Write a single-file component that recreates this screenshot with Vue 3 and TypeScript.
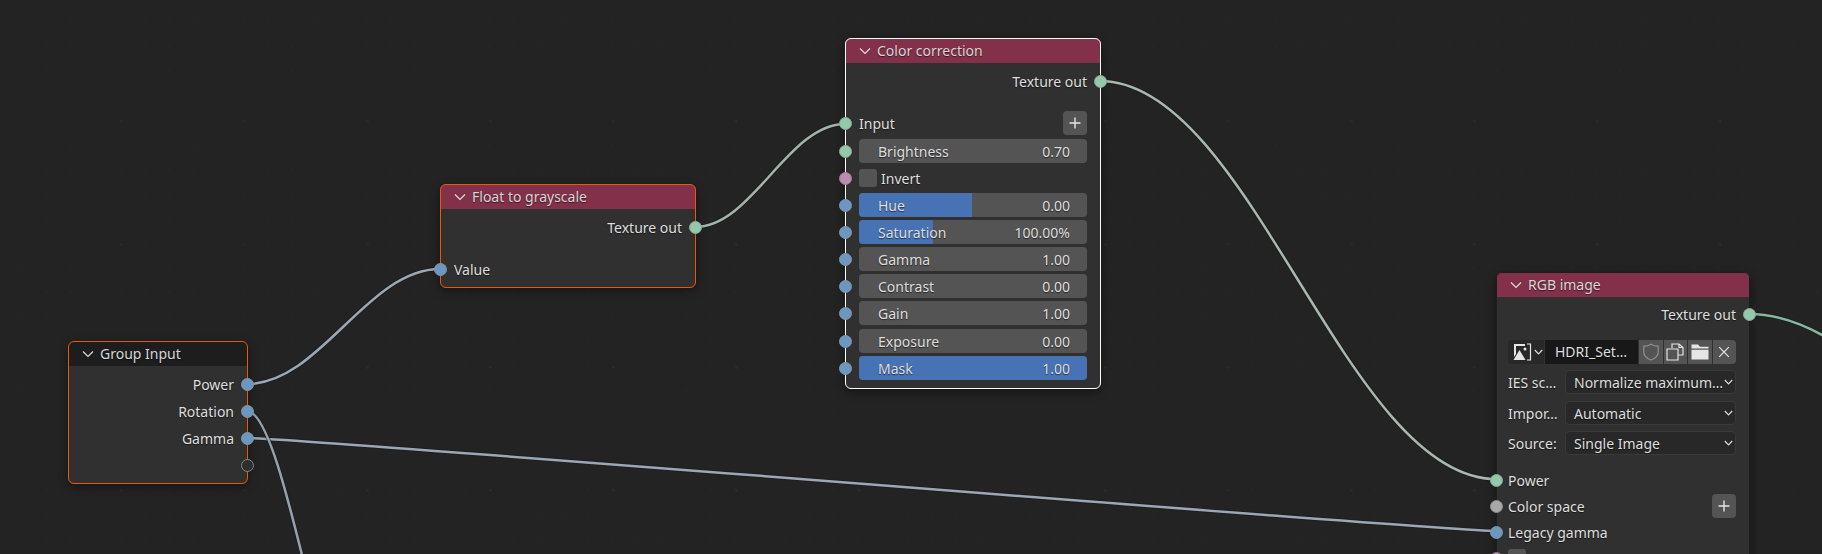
<template>
  <div class="canvas">
    <svg class="wires" width="1822" height="554">
      <g v-for="w in wires" :key="w.id" fill="none">
        <path :d="wirePath(w)" stroke="#1a1a1a" stroke-opacity="0.5" stroke-width="4.5" />
        <path :d="wirePath(w)" :stroke="w.color" stroke-width="2.5" />
      </g>
    </svg>

    <div
      v-for="node in nodes"
      :key="node.title"
      class="node"
      :class="node.state"
      :style="{ left: node.x + 'px', top: node.y + 'px', width: node.w + 'px' }"
    >
      <div class="head" :class="{ dark: node.dark }">
        <svg class="chevron" width="12" height="12" viewBox="0 0 12 12">
          <path d="M1 3.5 L6 8.5 L11 3.5" />
        </svg>
        <span>{{ node.title }}</span>
      </div>

      <div class="body" :style="{ paddingBottom: (node.pad ?? 7) + 'px' }">
        <div
          v-for="(row, i) in node.rows"
          :key="i"
          class="row"
          :class="{ right: row.kind === 'out' }"
          :style="{ marginTop: (row.gap ?? 3) + 'px' }"
        >
          <i
            v-if="row.socket"
            class="socket"
            :class="[row.socket, row.kind === 'out' ? 'on-right' : 'on-left']"
          ></i>

          <span v-if="row.kind === 'out' || row.kind === 'in'">{{ row.label }}</span>

          <button v-if="row.plus" class="plus">
            <svg width="12" height="12" viewBox="0 0 12 12"><path d="M6 0.5 V11.5 M0.5 6 H11.5" /></svg>
          </button>

          <div v-if="row.kind === 'slider'" class="slider">
            <div class="fill" :style="{ width: (row.fill ?? 0) + '%' }"></div>
            <span class="name">{{ row.label }}</span>
            <span class="value">{{ row.value }}</span>
          </div>

          <template v-if="row.kind === 'check'">
            <span class="box"></span>
            <span>{{ row.label }}</span>
          </template>

          <template v-if="row.kind === 'select'">
            <span class="select-label">{{ row.label }}</span>
            <div class="select">
              <span>{{ row.value }}</span>
              <svg class="mini" width="9" height="6" viewBox="0 0 9 6"><path d="M0.8 1 L4.5 4.8 L8.2 1" /></svg>
            </div>
          </template>

          <div v-if="row.kind === 'image'" class="picker">
            <div class="pick-type">
              <svg width="19" height="18" viewBox="0 0 19 18">
                <path class="fillw" d="M1 1 H12 V3 H3 V11 L1 14 Z" />
                <path class="fillw" d="M0.5 17 L6.5 7 L12.5 17 Z" />
                <circle class="fillw" cx="12" cy="6" r="1.5" />
                <path class="linew" d="M14 1 H17.5 V17 H14" />
              </svg>
              <svg class="mini" width="9" height="6" viewBox="0 0 9 6"><path d="M0.8 1 L4.5 4.8 L8.2 1" /></svg>
            </div>
            <div class="pick-name">HDRI_Set…</div>
            <div class="pick-btn">
              <svg width="18" height="18" viewBox="0 0 18 18">
                <path class="lineg" d="M9 1.2 C6.5 2.8 4.5 3.2 1.8 3.2 V9 C1.8 13 5 15.5 9 17 C13 15.5 16.2 13 16.2 9 V3.2 C13.5 3.2 11.5 2.8 9 1.2 Z" />
              </svg>
            </div>
            <div class="pick-btn">
              <svg width="18" height="18" viewBox="0 0 18 18">
                <path class="linew" d="M6 5 V1 H13 L17 4.5 V12 H12" />
                <path class="linew" d="M13 1 V4.5 H17" />
                <path class="linew" d="M1 6 H12 V17 H1 Z" />
              </svg>
            </div>
            <div class="pick-btn">
              <svg width="18" height="16" viewBox="0 0 18 16">
                <path class="fillw" d="M0.5 0.5 H7 L9 2.8 H17.5 V4.6 H0.5 Z" />
                <path class="fillw" d="M0.5 5.8 H17.5 V15.5 H0.5 Z" />
              </svg>
            </div>
            <div class="pick-btn">
              <svg width="12" height="12" viewBox="0 0 12 12"><path class="linew" d="M1.2 1.2 L10.8 10.8 M10.8 1.2 L1.2 10.8" /></svg>
            </div>
          </div>
        </div>
      </div>
    </div>
  </div>
</template>

<script setup lang="ts">
type Socket = 'green' | 'blue' | 'pink' | 'gray' | 'empty';

interface Row {
  kind: 'out' | 'in' | 'slider' | 'check' | 'select' | 'image';
  label?: string;
  value?: string;
  socket?: Socket;
  gap?: number;
  fill?: number;
  plus?: boolean;
}

interface GraphNode {
  title: string;
  x: number;
  y: number;
  w: number;
  state: 'active' | 'selected' | 'idle';
  dark?: boolean;
  pad?: number;
  rows: Row[];
}

interface Wire {
  id: string;
  x1: number;
  y1: number;
  x2: number;
  y2: number;
  h: number;
  color: string;
}

const slider = (label: string, value: string, fill = 0, gap = 3): Row => ({
  kind: 'slider',
  label,
  value,
  fill,
  gap,
  socket: 'blue',
});

const nodes: GraphNode[] = [
  {
    title: 'Group Input',
    x: 68,
    y: 341,
    w: 180,
    state: 'selected',
    dark: true,
    rows: [
      { kind: 'out', label: 'Power', socket: 'blue', gap: 6 },
      { kind: 'out', label: 'Rotation', socket: 'blue' },
      { kind: 'out', label: 'Gamma', socket: 'blue' },
      { kind: 'out', label: '', socket: 'empty' },
    ],
  },
  {
    title: 'Float to grayscale',
    x: 440,
    y: 184,
    w: 256,
    state: 'selected',
    rows: [
      { kind: 'out', label: 'Texture out', socket: 'green', gap: 6 },
      { kind: 'in', label: 'Value', socket: 'blue', gap: 18 },
    ],
  },
  {
    title: 'Color correction',
    x: 845,
    y: 38,
    w: 256,
    state: 'active',
    pad: 9,
    rows: [
      { kind: 'out', label: 'Texture out', socket: 'green', gap: 6 },
      { kind: 'in', label: 'Input', socket: 'green', gap: 18, plus: true },
      { ...slider('Brightness', '0.70'), socket: 'green', gap: 4 },
      { kind: 'check', label: 'Invert', socket: 'pink' },
      slider('Hue', '0.00', 49.5),
      slider('Saturation', '100.00%', 32.5),
      slider('Gamma', '1.00'),
      slider('Contrast', '0.00'),
      slider('Gain', '1.00'),
      slider('Exposure', '0.00', 0, 4),
      slider('Mask', '1.00', 100),
    ],
  },
  {
    title: 'RGB image',
    x: 1496,
    y: 272,
    w: 254,
    state: 'idle',
    rows: [
      { kind: 'out', label: 'Texture out', socket: 'green', gap: 5 },
      { kind: 'image', gap: 14 },
      { kind: 'select', label: 'IES sc…', value: 'Normalize maximum…', gap: 6 },
      { kind: 'select', label: 'Impor…', value: 'Automatic', gap: 7 },
      { kind: 'select', label: 'Source:', value: 'Single Image', gap: 6 },
      { kind: 'in', label: 'Power', socket: 'green', gap: 13 },
      { kind: 'in', label: 'Color space', socket: 'gray', gap: 2, plus: true },
      { kind: 'in', label: 'Legacy gamma', socket: 'blue', gap: 2 },
      { kind: 'check', label: 'Invert', socket: 'pink', gap: 2 },
    ],
  },
];

const wires: Wire[] = [
  { id: 'w1', x1: 247, y1: 384, x2: 440, y2: 269, h: 73, color: '#9aa8b5' },
  { id: 'w2', x1: 695, y1: 227, x2: 845, y2: 124, h: 57, color: '#a3b5aa' },
  { id: 'w3', x1: 1100, y1: 81, x2: 1496, y2: 479, h: 150, color: '#a8b8ae' },
  { id: 'w4', x1: 247, y1: 438, x2: 1496, y2: 531, h: 60, color: '#9aa8b5' },
  { id: 'w5', x1: 247, y1: 411, x2: 372, y2: 760, h: 40, color: '#94a2ae' },
  { id: 'w6', x1: 1749, y1: 314, x2: 2100, y2: 520, h: 130, color: '#84b8a0' },
];

function wirePath(w: Wire): string {
  return `M ${w.x1} ${w.y1} C ${w.x1 + w.h} ${w.y1}, ${w.x2 - w.h} ${w.y2}, ${w.x2} ${w.y2}`;
}
</script>

<style>
body {
  background: #232323;
}
</style>

<style scoped>
.canvas {
  position: relative;
  width: 1822px;
  height: 554px;
  overflow: hidden;
  background-color: #232323;
  background-image:
    radial-gradient(circle, #2a2a2a 1px, transparent 1.6px),
    radial-gradient(circle, #262626 0.8px, transparent 1.3px);
  background-size: 123px 123px, 24.6px 24.6px;
  background-position: 60px 60px, 9.7px 9.7px;
  font-family: "Noto Sans", sans-serif;
  font-size: 14px;
  color: #dedede;
  text-shadow: 0 1px 1px rgba(0, 0, 0, 0.55);
}

.wires {
  position: absolute;
  left: 0;
  top: 0;
}

.node {
  position: absolute;
  box-sizing: border-box;
  background: #303030;
  border-radius: 6px;
  box-shadow: 0 3px 10px rgba(0, 0, 0, 0.4);
  outline: 1px solid transparent;
  outline-offset: -1px;
}

.node.selected {
  outline-color: #ed5700;
}

.node.active {
  outline-color: #ffffff;
}

.node.idle {
  outline-color: #1d1d1d;
}

.head {
  display: flex;
  align-items: center;
  gap: 6px;
  height: 25px;
  padding-left: 14px;
  background: #83314a;
  border-radius: 6px 6px 0 0;
  color: #d6d6d6;
}

.head.dark {
  background: #1d1d1d;
}

.chevron path {
  fill: none;
  stroke: #dcdcdc;
  stroke-width: 1.2;
}

.body {
  display: flex;
  flex-direction: column;
  padding: 0 14px 7px 14px;
}

.idle .body {
  padding-left: 12px;
}

.row {
  position: relative;
  display: flex;
  align-items: center;
  justify-content: space-between;
  height: 24px;
  flex-shrink: 0;
}

.row.right {
  justify-content: flex-end;
}

.socket {
  position: absolute;
  top: 5.5px;
  box-sizing: border-box;
  width: 13px;
  height: 13px;
  border-radius: 50%;
  border: 1.5px solid #888888;
}

.socket.on-left {
  left: -20px;
}

.idle .socket.on-left {
  left: -18.5px;
}

.socket.on-right {
  right: -19.5px;
}

.socket.green {
  background: #93c9ab;
  border-color: #8ea598;
}

.socket.blue {
  background: #6b97c3;
  border-color: #87939e;
}

.socket.pink {
  background: #bd8ab0;
  border-color: #93858f;
}

.socket.gray {
  background: #a8a8a8;
  border-color: #8f8f8f;
}

.socket.empty {
  background: #2e2e2e;
  border-color: #848484;
}

.plus {
  display: flex;
  align-items: center;
  justify-content: center;
  width: 24px;
  height: 24px;
  padding: 0;
  border: none;
  border-radius: 4px;
  background: #545454;
}

.plus path {
  fill: none;
  stroke: #e6e6e6;
  stroke-width: 1.4;
}

.slider {
  position: relative;
  display: flex;
  align-items: center;
  justify-content: space-between;
  width: 100%;
  height: 24px;
  padding: 0 17px 0 19px;
  box-sizing: border-box;
  border-radius: 4px;
  background: #545454;
  overflow: hidden;
}

.fill {
  position: absolute;
  left: 0;
  top: 0;
  bottom: 0;
  background: #4772b3;
}

.name,
.value {
  position: relative;
}

.box {
  width: 18px;
  height: 18px;
  margin-right: 4px;
  border-radius: 3px;
  background: #545454;
}

.row:has(.box) {
  justify-content: flex-start;
}

.select-label {
  width: 57px;
  flex-shrink: 0;
  white-space: nowrap;
}

.select {
  flex: 1;
  display: flex;
  align-items: center;
  justify-content: space-between;
  min-width: 0;
  height: 24px;
  padding: 0 2px 0 8px;
  box-sizing: border-box;
  border-radius: 4px;
  background: #282828;
  border: 1px solid #3a3a3a;
  white-space: nowrap;
  overflow: hidden;
}

.mini {
  flex-shrink: 0;
}

.mini path {
  fill: none;
  stroke: #dcdcdc;
  stroke-width: 1.2;
}

.picker {
  display: flex;
  width: 100%;
  height: 24px;
  border-radius: 4px;
  overflow: hidden;
}

.pick-type {
  display: flex;
  align-items: center;
  gap: 2px;
  width: 37px;
  padding-left: 5px;
  box-sizing: border-box;
  background: #282828;
  border-right: 1px solid #333;
}

.pick-name {
  width: 93px;
  padding-left: 10px;
  box-sizing: border-box;
  line-height: 24px;
  background: #181818;
  white-space: nowrap;
}

.pick-btn {
  flex: 1;
  display: flex;
  align-items: center;
  justify-content: center;
  margin-left: 1px;
  background: #545454;
}

.fillw {
  fill: #e6e6e6;
}

.linew {
  fill: none;
  stroke: #e6e6e6;
  stroke-width: 1.2;
}

.lineg {
  fill: none;
  stroke: #8f8f8f;
  stroke-width: 1.2;
}
</style>
